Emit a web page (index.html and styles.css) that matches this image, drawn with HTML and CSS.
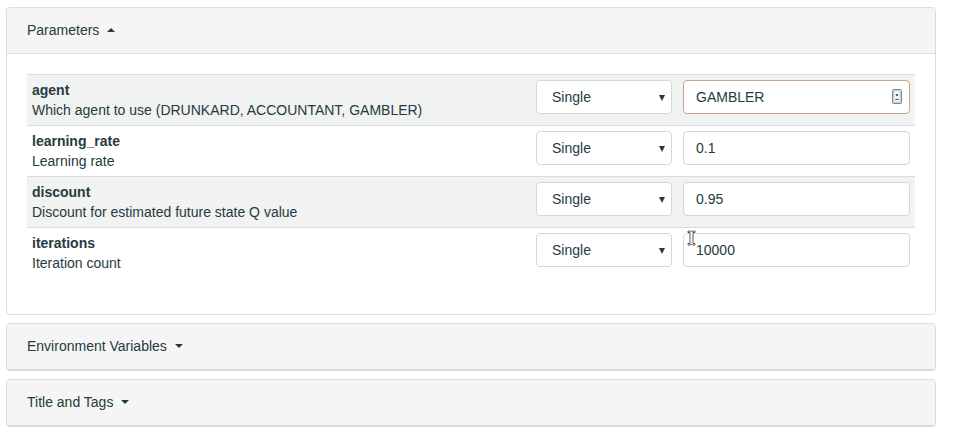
FILE: index.html
```html
<!DOCTYPE html>
<html>
<head>
<meta charset="utf-8">
<link rel="stylesheet" href="styles.css">
</head>
<body>
<div class="page">
  <div class="panel">
    <div class="panel-heading open">Parameters <span class="caret up"></span></div>
    <div class="panel-body">
      <div class="params">
        <div class="row shaded">
          <div class="cell info"><div class="name">agent</div><div class="desc">Which agent to use (DRUNKARD, ACCOUNTANT, GAMBLER)</div></div>
          <div class="cell sel"><div class="select">Single<span class="arrow"></span></div></div>
          <div class="cell inp"><div class="input focused">GAMBLER
            <svg class="card" width="10" height="15" viewBox="0 0 10 15"><rect x="0.5" y="0.5" width="9" height="14" rx="1" fill="#e8e4d8" stroke="#6f8a94"/><rect x="2" y="2" width="6" height="11" fill="#fff" stroke="#9ab" stroke-width="0.6"/><circle cx="5" cy="6" r="1.3" fill="#567"/><path d="M3 11c0-1.6 4-1.6 4 0z" fill="#567"/></svg>
          </div></div>
        </div>
        <div class="row">
          <div class="cell info"><div class="name">learning_rate</div><div class="desc">Learning rate</div></div>
          <div class="cell sel"><div class="select">Single<span class="arrow"></span></div></div>
          <div class="cell inp"><div class="input">0.1</div></div>
        </div>
        <div class="row shaded">
          <div class="cell info"><div class="name">discount</div><div class="desc">Discount for estimated future state Q value</div></div>
          <div class="cell sel"><div class="select">Single<span class="arrow"></span></div></div>
          <div class="cell inp"><div class="input">0.95</div></div>
        </div>
        <div class="row last">
          <div class="cell info"><div class="name">iterations</div><div class="desc">Iteration count</div></div>
          <div class="cell sel"><div class="select">Single<span class="arrow"></span></div></div>
          <div class="cell inp"><div class="input has-cursor">10000
            <svg class="ibeam" width="9" height="16" viewBox="0 0 9 16"><path d="M1 1h2.5l1 1 1-1H8v1.5H6v11h2V15H5.5l-1-1-1 1H1v-1.5h2v-11H1z" fill="#fff" stroke="#333" stroke-width="0.8"/></svg>
          </div></div>
        </div>
      </div>
    </div>
  </div>
  <div class="panel">
    <div class="panel-heading">Environment Variables <span class="caret"></span></div>
  </div>
  <div class="panel">
    <div class="panel-heading">Title and Tags <span class="caret"></span></div>
  </div>
</div>
</body>
</html>
```
FILE: styles.css
```css
* { box-sizing: border-box; }
body {
  margin: 0;
  background: #fff;
  font-family: "Liberation Sans", Arial, sans-serif;
  font-size: 14px;
  line-height: 20px;
  color: #263a40;
}
.page {
  padding: 7px 0 0 6px;
  width: 936px;
}
.panel {
  border: 1px solid #dcdcdc;
  border-radius: 4px;
  margin-bottom: 8px;
  background: #fff;
}
.panel-heading {
  background: #f5f5f5;
  padding: 12px 20px 13px;
  height: 46px;
  border-radius: 3px;
  border-bottom: 1px solid #d6d6d6;
}
.panel-heading.open {
  border-radius: 3px 3px 0 0;
  border-bottom-color: #dedede;
}
.caret {
  display: inline-block;
  width: 0;
  height: 0;
  margin-left: 4px;
  vertical-align: 3px;
  border-left: 4px solid transparent;
  border-right: 4px solid transparent;
  border-top: 4px solid #263a40;
}
.caret.up {
  border-top: 0;
  border-bottom: 4px solid #263a40;
}
.panel-body {
  padding: 20px 20px 36px 20px;
}
.row {
  display: grid;
  grid-template-columns: 504px 147px 1fr;
  border-top: 1px solid #dcdcdc;
  height: 51px;
}
.row.shaded { background: #f1f2f2; }
.cell { padding: 5px; }
.name { font-weight: bold; }
.select, .input {
  height: 34px;
  border: 1px solid #cfd9d9;
  border-radius: 4px;
  background: #fff;
  line-height: 33px;
  position: relative;
}
.select {
  padding-left: 15px;
  width: 136px;
}
.arrow {
  position: absolute;
  right: 6px;
  top: 14px;
  width: 0;
  height: 0;
  border-left: 3px solid transparent;
  border-right: 3px solid transparent;
  border-top: 6px solid #263a40;
}
.input {
  padding-left: 12px;
  width: 227px;
}
.input.focused {
  border-color: #c6a68a;
}
.card {
  position: absolute;
  right: 7px;
  top: 8px;
}
.ibeam {
  position: absolute;
  left: 3px;
  top: -4px;
}
```
